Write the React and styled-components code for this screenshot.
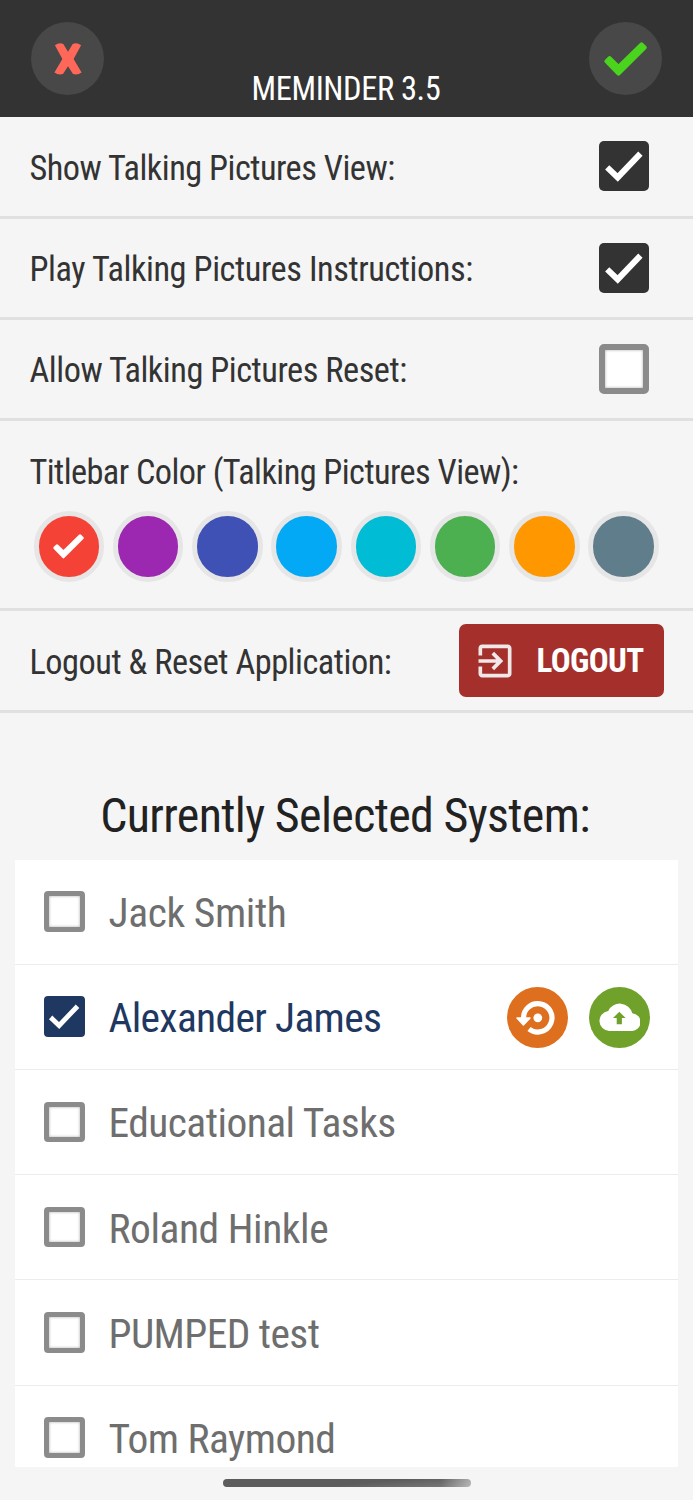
import React from 'react'
import styled, { createGlobalStyle } from 'styled-components'

const GlobalStyle = createGlobalStyle`
  * {
    box-sizing: border-box;
  }
  body {
    margin: 0;
    background: #f5f5f5;
    font-family: "Roboto Condensed", Roboto, sans-serif;
    font-stretch: 75%;
    color: #333;
  }
`

const Screen = styled.div`
  display: flex;
  flex-direction: column;
  height: 1500px;
  overflow: hidden;
  background: #f5f5f5;
`

const Header = styled.header`
  display: flex;
  justify-content: space-between;
  flex: none;
  height: 117.33px;
  padding: 22px 31px 0;
  background: #333;
`

const RoundButton = styled.button`
  display: flex;
  align-items: center;
  justify-content: center;
  width: 73px;
  height: 73px;
  padding: 0;
  border: 0;
  border-radius: 50%;
  background: #484848;
`

const Title = styled.h1`
  margin: 48px 1px 0 0;
  font-size: 32.5px;
  line-height: 38px;
  letter-spacing: -0.4px;
  font-weight: 400;
  color: white;
`

const Row = styled.div`
  display: flex;
  align-items: center;
  justify-content: space-between;
  flex: none;
  height: 101.25px;
  padding: 0 ${props => props.$right || '44px'} 0 29.5px;
  border-bottom: 3px solid #e0e0e0;
`

const ColorRow = styled(Row)`
  flex-direction: column;
  align-items: stretch;
  justify-content: flex-start;
  height: 190.33px;
  padding: 27.5px 34px 0 29.5px;
`

const Label = styled.span`
  padding-top: 3px;
  font-size: 34.3px;
  line-height: 40px;
  letter-spacing: ${props => props.$spacing || '-0.46px'};
  white-space: nowrap;
`

const Box = styled.span`
  display: flex;
  align-items: center;
  justify-content: center;
  flex: none;
  width: ${props => props.$size}px;
  height: ${props => props.$size}px;
  border-radius: ${props => props.$size / 10}px;
  border: ${props => (props.$color ? 0 : Math.round(props.$size / 8.4))}px solid #8b8b8b;
  background: ${props => props.$color || 'white'};
  box-shadow: ${props => (props.$color ? 'none' : 'inset 0 0 3px #aaa')};
`

const Swatches = styled.div`
  display: flex;
  justify-content: space-between;
  margin: 19.5px 0 0 4px;
`

const Swatch = styled.span`
  display: flex;
  align-items: center;
  justify-content: center;
  width: 70.6px;
  height: 70.6px;
  border: 5px solid #e6e6e6;
  border-radius: 50%;
  background: ${props => props.$color};
`

const LogoutButton = styled.button`
  display: flex;
  align-items: center;
  width: 205px;
  height: 73px;
  padding: 0 0 0 14px;
  border: 0;
  border-radius: 7px;
  background: #a42f2b;
  color: white;
  font-family: inherit;
  font-stretch: inherit;
  font-size: 33px;
  font-weight: 700;
  letter-spacing: -0.6px;
  white-space: nowrap;
  svg {
    flex: none;
    margin-right: 19.5px;
  }
`

const Heading = styled.h2`
  flex: none;
  margin: 74px 3px 0 0;
  height: 73px;
  font-size: 48px;
  line-height: 57px;
  letter-spacing: -0.66px;
  font-weight: 400;
  text-align: center;
  color: #222;
`

const List = styled.ul`
  flex: none;
  height: 607px;
  margin: 0 15px;
  padding: 0;
  overflow: hidden;
  background: white;
  list-style: none;
`

const Item = styled.li`
  display: flex;
  align-items: center;
  height: 105.2px;
  padding: 0 28px 0.5px 29px;
  border-bottom: 1.5px solid #ececec;
`

const Name = styled.span`
  flex: 1;
  margin-left: 24px;
  padding-top: 2px;
  font-size: 41.5px;
  letter-spacing: ${props => props.$spacing || '-0.55px'};
  white-space: nowrap;
  color: ${props => (props.$selected ? '#1e3861' : '#6e6e6e')};
`

const Action = styled.button`
  display: flex;
  align-items: center;
  justify-content: center;
  width: 61px;
  height: 61px;
  margin: 1px 0 0 21px;
  padding: 0;
  border: 0;
  border-radius: 50%;
  background: ${props => props.$color};
`

const HomeBar = styled.div`
  flex: none;
  width: 248px;
  height: 8px;
  margin: 12px 0 0 223px;
  border-radius: 4px;
  background: linear-gradient(175deg, transparent 55%, rgba(255, 255, 255, 0.2)),
    linear-gradient(90deg, #5c5c5c 88%, #a5a5a5);
`

const RoundCheck = ({ width, color }) => (
  <svg width={width} viewBox="0 0 43 34">
    <path
      d="M2.600 19.200 5.600 16.300 14.500 25 37.500 2.500 40.600 5.600 14.500 31.600Z"
      fill={color}
      stroke={color}
      strokeWidth="4.2"
      strokeLinejoin="round"
    />
  </svg>
)

const Checkbox = ({ size, checked, color }) => (
  <Box $size={size} $color={checked ? color : undefined}>
    {checked && (
      <svg width={size} height={size} viewBox="0 0 50 50" fill="none">
        <path d="M8.200 26.400 18.700 36.400 41.400 12.600" stroke="white" strokeWidth="6" />
      </svg>
    )}
  </Box>
)

const settings = [
  { label: 'Show Talking Pictures View:', checked: true, spacing: '-0.5px' },
  { label: 'Play Talking Pictures Instructions:', checked: true, spacing: '-0.42px' },
  { label: 'Allow Talking Pictures Reset:', checked: false },
]

const colors = ['#f44336', '#9c27b0', '#3f51b5', '#03a9f4', '#00bcd4', '#4caf50', '#ff9800', '#607d8b']

const systems = [
  { name: 'Jack Smith', spacing: '-0.4px' },
  { name: 'Alexander James', selected: true, spacing: '-0.68px' },
  { name: 'Educational Tasks' },
  { name: 'Roland Hinkle', spacing: '-0.45px' },
  { name: 'PUMPED test', spacing: '-0.6px' },
  { name: 'Tom Raymond' },
]

const App = () => (
  <Screen>
    <GlobalStyle />
    <Header>
      <RoundButton aria-label="Cancel">
        <svg width="28" height="32" viewBox="0 0 28 32">
          <path
            d="M.9 2.200Q5-.8 9.300.9L14 8.800 18.700.9Q23-.8 27.100 2.200L19.600 16 27.600 29.600Q23.500 32.400 19 31L14 23.200 9 31Q4.500 32.400.4 29.600L8.400 16Z"
            fill="#ff6859"
          />
        </svg>
      </RoundButton>
      <Title>MEMINDER 3.5</Title>
      <RoundButton aria-label="Save">
        <RoundCheck width={43} color="#4bd41d" />
      </RoundButton>
    </Header>

    {settings.map(({ label, checked, spacing }) => (
      <Row key={label}>
        <Label $spacing={spacing}>{label}</Label>
        <Checkbox size={50} checked={checked} color="#333" />
      </Row>
    ))}

    <ColorRow>
      <Label $spacing="-0.56px">Titlebar Color (Talking Pictures View):</Label>
      <Swatches>
        {colors.map((color, i) => (
          <Swatch key={color} $color={color}>
            {i === 0 && <RoundCheck width={31} color="white" />}
          </Swatch>
        ))}
      </Swatches>
    </ColorRow>

    <Row $right="29px">
      <Label>Logout &amp; Reset Application:</Label>
      <LogoutButton>
        <svg width="44" height="44" viewBox="0 0 24 24" fill="#f0e8e8">
          <path d="M10.090 15.590 11.500 17l5-5-5-5-1.410 1.410L12.670 11H3v2h9.670l-2.580 2.590zM19 3H5c-1.110 0-2 .9-2 2v4h2V5h14v14H5v-4H3v4c0 1.100.89 2 2 2h14c1.100 0 2-.9 2-2V5c0-1.100-.9-2-2-2z" />
        </svg>
        LOGOUT
      </LogoutButton>
    </Row>

    <Heading>Currently Selected System:</Heading>
    <List>
      {systems.map(({ name, selected, spacing }) => (
        <Item key={name}>
          <Checkbox size={40.5} checked={selected} color="#1e3861" />
          <Name $selected={selected} $spacing={spacing}>{name}</Name>
          {selected && (
            <>
              <Action $color="#dd6f1e" aria-label="Restore">
                <svg width="61" height="61" viewBox="0 0 61 61" fill="none">
                  <path d="M16.600 32A14.200 14.200 0 1 1 22 42" stroke="white" strokeWidth="5.2" />
                  <path
                    d="M10 31H23L16.400 38Z"
                    fill="white"
                    stroke="white"
                    strokeWidth="1.500"
                    strokeLinejoin="round"
                  />
                  <circle cx="30.800" cy="30.800" r="4.400" fill="white" />
                </svg>
              </Action>
              <Action $color="#70a22b" aria-label="Upload">
                <svg width="41" height="28" viewBox="0 0 41 28">
                  <path
                    d="M10.200 28A10.100 10.100 0 0 1 9.200 7.900 12.900 12.900 0 0 1 33.300 10.200 8.900 8.900 0 0 1 32 28Z"
                    fill="white"
                  />
                  <path d="M20.300 8.700 26.600 14.900H22.900V21.300H17.700V14.900H14Z" fill="#70a22b" />
                </svg>
              </Action>
            </>
          )}
        </Item>
      ))}
    </List>
    <HomeBar />
  </Screen>
)

export default App
